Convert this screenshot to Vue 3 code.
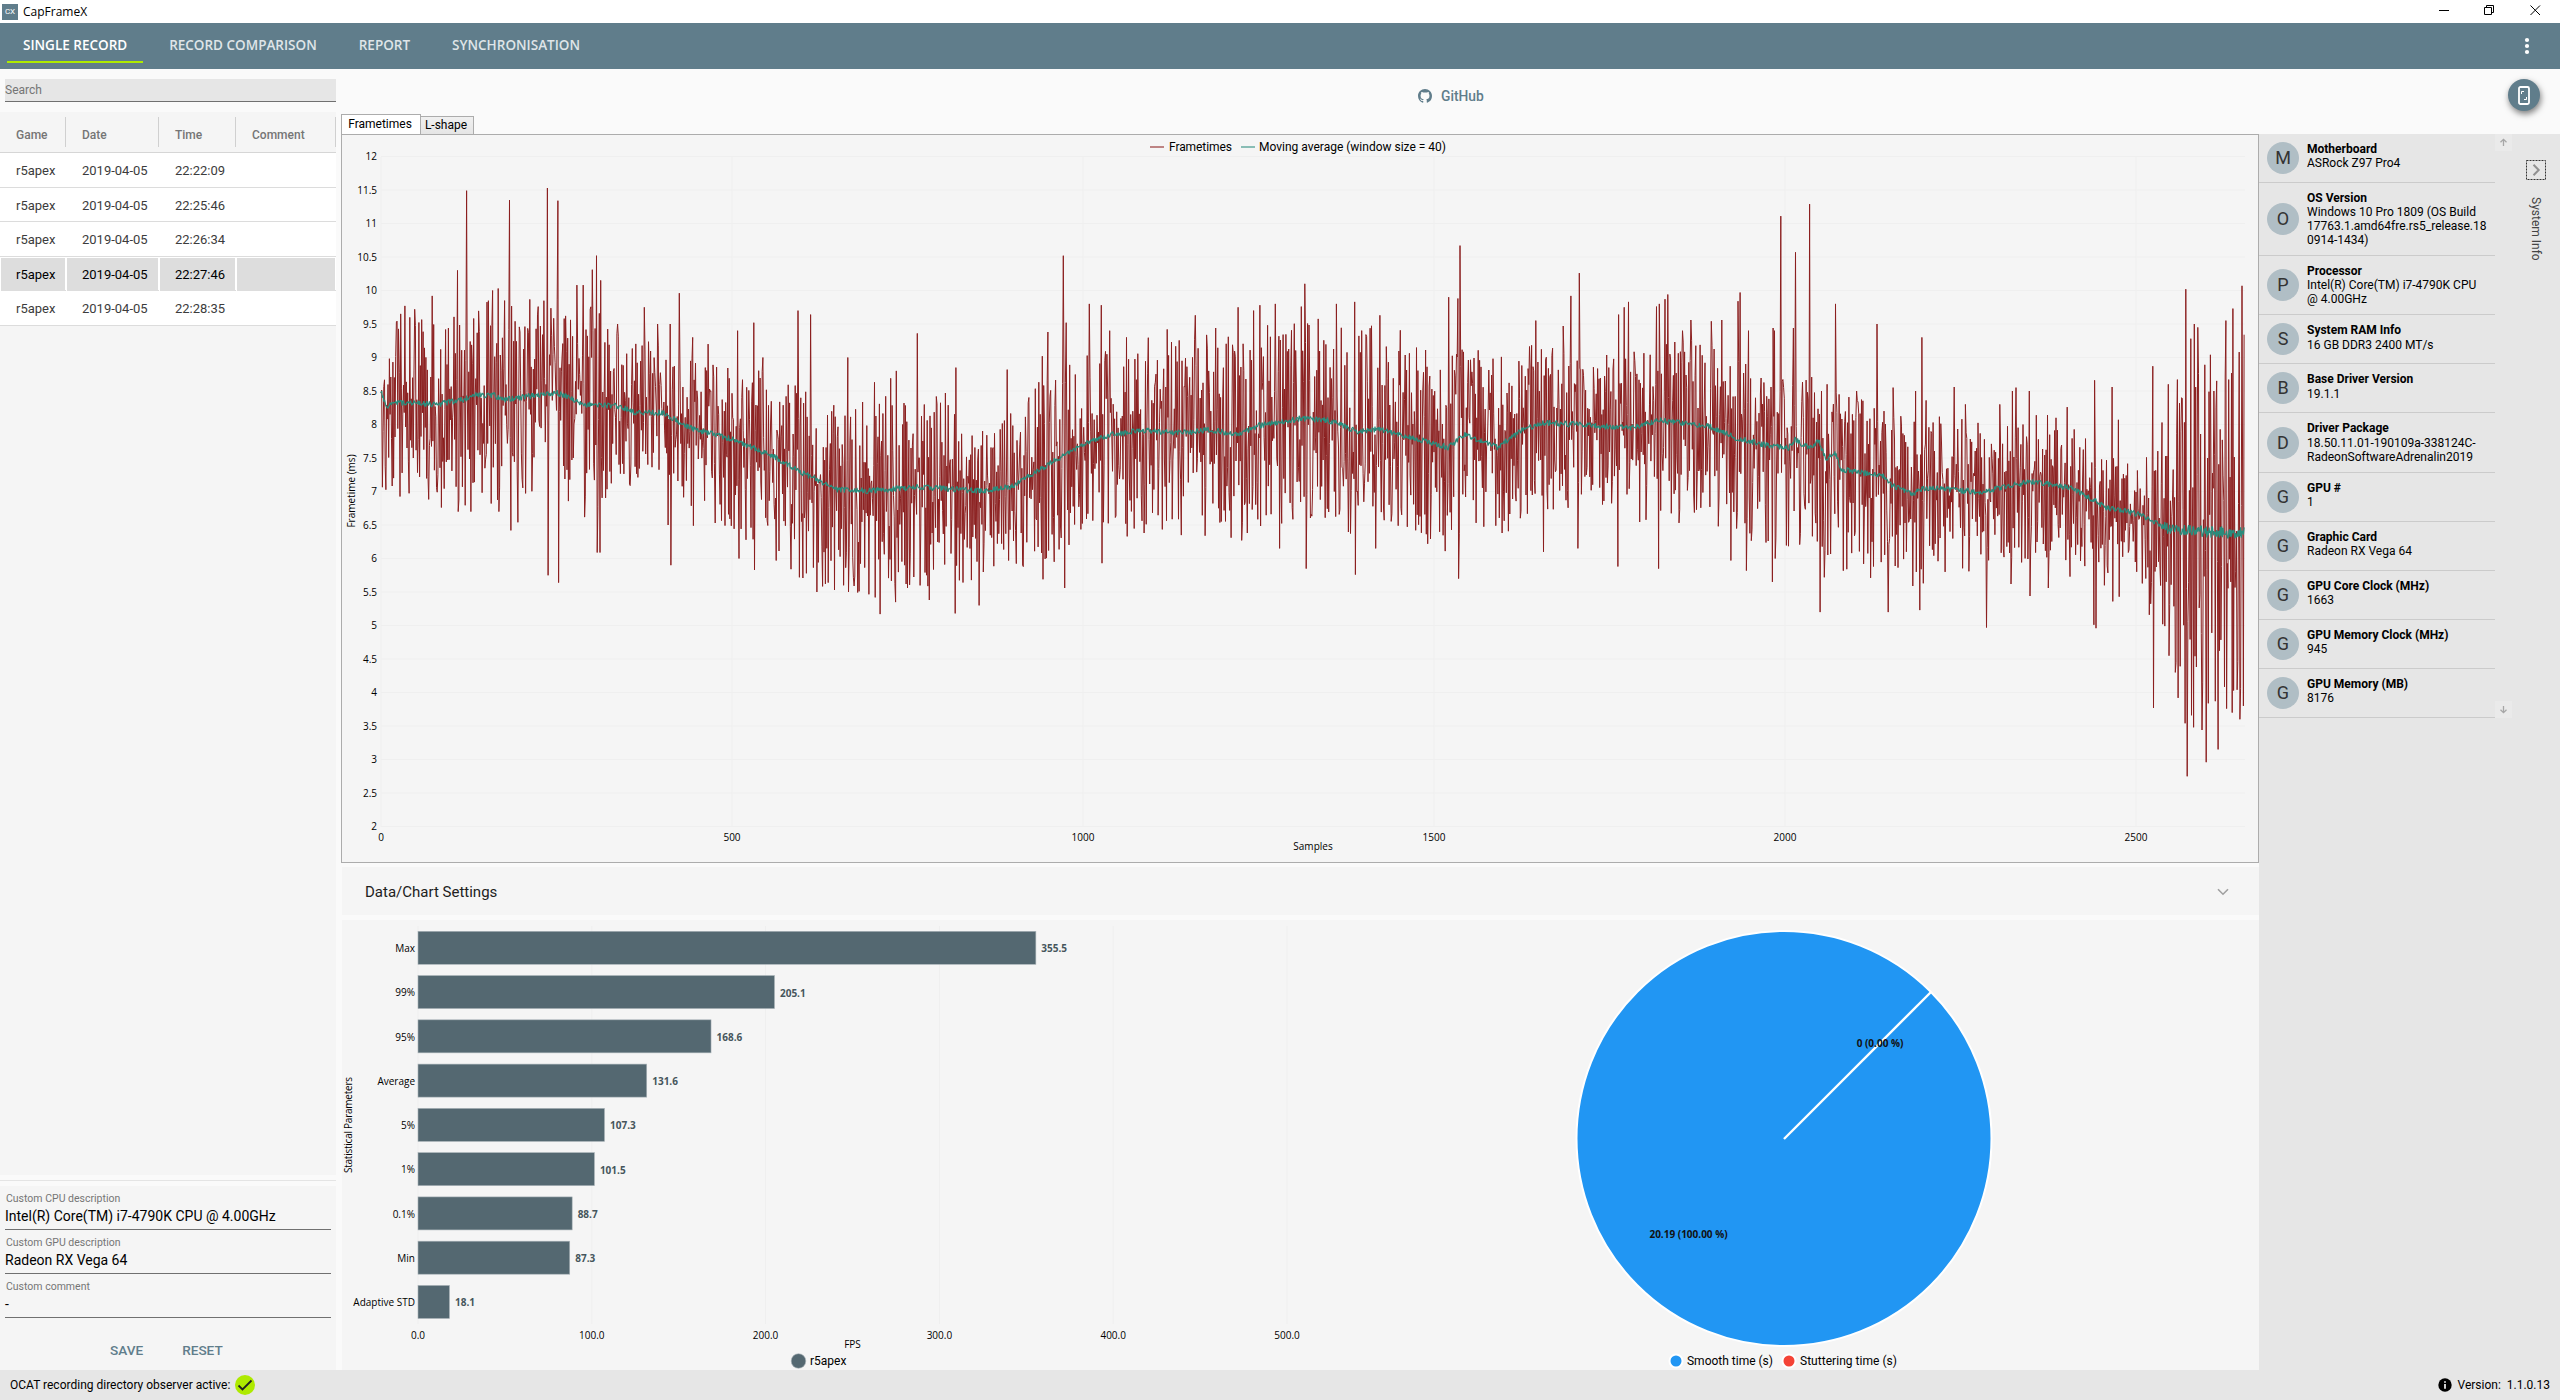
<template>
  <div class="window">
    <header class="title-bar">
      <span class="app-icon">CX</span>
      <span class="app-title">CapFrameX</span>
      <svg class="window-buttons" width="130" height="23" viewBox="0 0 130 23">
        <path d="M9 10.5h10M54.500 7.500h7v7h-7zM56.500 7v-1.500h7v7h-1.500M100.500 5.500l9.500 9.500M110 5.500l-9.500 9.500" />
      </svg>
    </header>

    <nav class="nav">
      <span
        v-for="(tab, i) in tabs"
        :key="tab"
        class="nav-tab"
        :class="{ 'nav-tab--active': i === 0 }"
      >{{ tab }}</span>
      <svg class="nav-menu" width="6" height="18" viewBox="0 0 6 18">
        <circle cx="3" cy="3" r="2.100" />
        <circle cx="3" cy="9" r="2.100" />
        <circle cx="3" cy="15" r="2.100" />
      </svg>
    </nav>

    <main class="body">
      <aside class="records">
        <div class="search">Search</div>
        <div class="record-list">
          <div class="record-row record-row--head">
            <span v-for="name in columns" :key="name" class="cell">{{ name }}</span>
          </div>
          <div
            v-for="time in times"
            :key="time"
            class="record-row"
            :class="{ 'record-row--selected': time === '22:27:46' }"
          >
            <span class="cell">r5apex</span>
            <span class="cell">2019-04-05</span>
            <span class="cell">{{ time }}</span>
            <span class="cell"></span>
          </div>
        </div>
        <div class="splitter"></div>
        <div class="record-form">
          <div v-for="field in fields" :key="field.label" class="field">
            <span class="field-label">{{ field.label }}</span>
            <span class="field-value">{{ field.value }}</span>
          </div>
          <div class="form-buttons">
            <span>SAVE</span>
            <span>RESET</span>
          </div>
        </div>
      </aside>

      <section class="workspace">
        <div class="toolbar">
          <span class="github">
            <svg width="14" height="14" viewBox="0 0 16 16">
              <path d="M8 0C3.580 0 0 3.580 0 8c0 3.540 2.290 6.530 5.470 7.590.4.070.55-.17.55-.38 0-.19-.01-.82-.01-1.490-2.010.37-2.530-.49-2.690-.94-.09-.23-.48-.94-.82-1.130-.28-.15-.68-.52-.01-.53.63-.01 1.080.58 1.230.82.72 1.210 1.870.87 2.330.66.070-.52.28-.87.51-1.070-1.780-.2-3.640-.89-3.640-3.950 0-.87.31-1.590.82-2.150-.08-.2-.36-1.020.08-2.120 0 0 .67-.21 2.200.82.64-.18 1.320-.27 2-.27s1.360.09 2 .27c1.530-1.040 2.200-.82 2.200-.82.44 1.100.16 1.920.08 2.120.51.56.82 1.270.82 2.150 0 3.070-1.870 3.750-3.650 3.950.29.25.54.73.54 1.480 0 1.070-.01 1.930-.01 2.200 0 .21.15.46.55.38A8.010 8.010 0 0 0 16 8c0-4.420-3.580-8-8-8z" />
            </svg>
            GitHub
          </span>
          <span class="fab">
            <svg width="12" height="19" viewBox="0 0 12 19">
              <rect x="1" y="1" width="10" height="17" rx="1.500" />
              <path d="M3.500 8V5.500H6M8.500 11v2.500H6" />
            </svg>
          </span>
        </div>

        <div class="content">
          <div class="charts">
            <div class="chart-tabs">
              <span class="chart-tab chart-tab--active">Frametimes</span>
              <span class="chart-tab">L-shape</span>
            </div>

            <div class="frametime-panel">
              <svg width="1916" height="727" viewBox="0 0 1916 727">
                <g class="grid">
                  <line v-for="v in yTicks" :key="v" x1="39" x2="1903" :y1="yPos(v)" :y2="yPos(v)" />
                  <line v-for="s in xTicks" :key="s" :x1="xPos(s)" :x2="xPos(s)" y1="22" y2="692" />
                </g>
                <path class="line-frametime" :d="framePath" />
                <path class="line-average" :d="averagePath" />
                <g class="tick">
                  <text v-for="v in yTicks" :key="v" x="35" :y="yPos(v) + 3.500" text-anchor="end">{{ v }}</text>
                  <text v-for="s in xTicks" :key="s" :x="xPos(s)" y="706" text-anchor="middle">{{ s }}</text>
                  <text x="971" y="715" text-anchor="middle">Samples</text>
                  <text transform="translate(12.500 356) rotate(-90)" text-anchor="middle">Frametime (ms)</text>
                </g>
                <g class="legend">
                  <line class="line-frametime legend-line" x1="808" x2="822" y1="12" y2="12" />
                  <text x="827" y="16" textLength="63">Frametimes</text>
                  <line class="line-average legend-line" x1="899" x2="913" y1="12" y2="12" />
                  <text x="917" y="16" textLength="187">Moving average (window size = 40)</text>
                </g>
              </svg>
            </div>

            <div class="settings">
              <span>Data/Chart Settings</span>
              <svg width="12" height="8" viewBox="0 0 12 8"><path d="M1 1.200l5 5 5-5" /></svg>
            </div>

            <div class="summary">
              <svg width="967" height="450" viewBox="0 0 967 450">
                <g class="grid">
                  <line v-for="n in 6" :key="n" :x1="fpsPos((n - 1) * 100)" :x2="fpsPos((n - 1) * 100)" y1="6" y2="404" />
                </g>
                <g v-for="(bar, i) in bars" :key="bar.name">
                  <rect class="bar" x="76" :y="11.300 + i * 44.270" :width="bar.fps * 1.738" height="33" />
                  <text class="tick" x="73" :y="32 + i * 44.270" text-anchor="end">{{ bar.name }}</text>
                  <text class="bar-value" :x="fpsPos(bar.fps) + 5.500" :y="32.300 + i * 44.270">{{ bar.fps.toFixed(1) }}</text>
                </g>
                <g class="tick">
                  <text v-for="n in 6" :key="n" :x="fpsPos((n - 1) * 100)" y="419" text-anchor="middle">{{ (n - 1) * 100 }}.0</text>
                  <text x="510.500" y="428" text-anchor="middle">FPS</text>
                  <text transform="translate(10 205) rotate(-90)" text-anchor="middle" textLength="96">Statistical Parameters</text>
                </g>
                <circle class="bar" cx="456.500" cy="441" r="7.300" />
                <text class="legend" x="468" y="445">r5apex</text>
              </svg>

              <svg width="950" height="450" viewBox="0 0 950 450">
                <circle class="pie" cx="475" cy="218.500" r="207.500" />
                <line class="pie-edge" x1="475" y1="219" x2="622" y2="72" />
                <text class="pie-label" x="571" y="127" text-anchor="middle">0 (0.00 %)</text>
                <text class="pie-label" x="379.500" y="318" text-anchor="middle">20.19 (100.00 %)</text>
                <circle class="pie" cx="367" cy="441" r="6.500" />
                <text class="legend" x="378" y="445" textLength="86">Smooth time (s)</text>
                <circle class="pie pie--stutter" cx="480" cy="441" r="6.500" />
                <text class="legend" x="491" y="445" textLength="97">Stuttering time (s)</text>
              </svg>
            </div>
          </div>

          <aside class="system">
            <div class="system-list">
              <div v-for="item in systemInfo" :key="item[0]" class="system-item">
                <span class="avatar">{{ item[0][0] }}</span>
                <div class="system-text">
                  <b>{{ item[0] }}</b>
                  <span v-for="line in item.slice(1)" :key="line">{{ line }}</span>
                </div>
              </div>
            </div>
            <div class="scroll">
              <svg width="17" height="17" viewBox="0 0 17 17"><path d="M8.500 12V5.500M5.500 8.300l3-3 3 3" /></svg>
              <svg width="17" height="17" viewBox="0 0 17 17"><path d="M8.500 5v6.500M5.500 8.700l3 3 3-3" /></svg>
            </div>
            <div class="expander">
              <svg width="20" height="20" viewBox="0 0 20 20">
                <rect x="0.500" y="0.500" width="19" height="19" />
                <path d="M7.500 4.800l5.200 5.200-5.200 5.200" />
              </svg>
              <span>System Info</span>
            </div>
          </aside>
        </div>
      </section>
    </main>

    <footer class="status">
      <span>OCAT recording directory observer active:</span>
      <svg class="status-ok" width="20" height="20" viewBox="0 0 20 20">
        <circle cx="10" cy="10" r="10" />
        <path d="M3.500 10.500l4 4L16.500 5.500" />
      </svg>
      <svg class="status-info" width="14" height="14" viewBox="0 0 14 14">
        <circle cx="7" cy="7" r="6.700" />
        <path d="M7 3.300v1.500M7 6v4.700" />
      </svg>
      <span class="version">Version:&nbsp; 1.1.0.13</span>
    </footer>
  </div>
</template>

<script setup>
const tabs = ['SINGLE RECORD', 'RECORD COMPARISON', 'REPORT', 'SYNCHRONISATION']
const columns = ['Game', 'Date', 'Time', 'Comment']
const times = ['22:22:09', '22:25:46', '22:26:34', '22:27:46', '22:28:35']

const fields = [
  { label: 'Custom CPU description', value: 'Intel(R) Core(TM) i7-4790K CPU @ 4.00GHz' },
  { label: 'Custom GPU description', value: 'Radeon RX Vega 64' },
  { label: 'Custom comment', value: '-' }
]

const systemInfo = [
  ['Motherboard', 'ASRock Z97 Pro4'],
  ['OS Version', 'Windows 10 Pro 1809 (OS Build', '17763.1.amd64fre.rs5_release.18', '0914-1434)'],
  ['Processor', 'Intel(R) Core(TM) i7-4790K CPU', '@ 4.00GHz'],
  ['System RAM Info', '16 GB DDR3 2400 MT/s'],
  ['Base Driver Version', '19.1.1'],
  ['Driver Package', '18.50.11.01-190109a-338124C-', 'RadeonSoftwareAdrenalin2019'],
  ['GPU #', '1'],
  ['Graphic Card', 'Radeon RX Vega 64'],
  ['GPU Core Clock (MHz)', '1663'],
  ['GPU Memory Clock (MHz)', '945'],
  ['GPU Memory (MB)', '8176']
]

const bars = [
  { name: 'Max', fps: 355.5 },
  { name: '99%', fps: 205.1 },
  { name: '95%', fps: 168.6 },
  { name: 'Average', fps: 131.6 },
  { name: '5%', fps: 107.3 },
  { name: '1%', fps: 101.5 },
  { name: '0.1%', fps: 88.7 },
  { name: 'Min', fps: 87.3 },
  { name: 'Adaptive STD', fps: 18.1 }
]

const yTicks = Array.from({ length: 21 }, (_, i) => 12 - i * 0.5)
const xTicks = [0, 500, 1000, 1500, 2000, 2500]
const xPos = (sample) => 39 + sample * 0.702
const yPos = (ms) => 21.5 + (12 - ms) * 67
const fpsPos = (fps) => 76 + fps * 1.738

// sample, moving average (ms)
const average = [
  [0, 8.5], [8, 8.25], [20, 8.33], [80, 8.3], [120, 8.38], [130, 8.44], [160, 8.44], [175, 8.37], [210, 8.42],
  [250, 8.48], [290, 8.3], [340, 8.27], [360, 8.18], [400, 8.18], [440, 7.95], [500, 7.78], [560, 7.52], [600, 7.28],
  [650, 7.03], [700, 7.01], [770, 7.07], [860, 7], [900, 7.08], [950, 7.4], [1000, 7.7], [1040, 7.85], [1080, 7.91],
  [1140, 7.88], [1180, 7.92], [1220, 7.85], [1250, 7.98], [1310, 8.09], [1350, 8.06], [1390, 7.9], [1420, 7.93],
  [1490, 7.75], [1520, 7.66], [1545, 7.85], [1590, 7.66], [1630, 7.95], [1660, 8.03], [1700, 8], [1780, 7.95],
  [1820, 8.06], [1890, 7.98], [1930, 7.8], [1970, 7.7], [2005, 7.65], [2015, 7.77], [2035, 7.65], [2048, 7.75],
  [2058, 7.5], [2072, 7.57], [2080, 7.33], [2140, 7.23], [2150, 7.1], [2180, 6.97], [2200, 7.06], [2280, 6.99],
  [2350, 7.15], [2410, 7.05], [2460, 6.75], [2505, 6.66], [2540, 6.46], [2600, 6.4], [2654, 6.38]
]

// sample, usual swing above and below the average (ms)
const swing = [
  [0, 1.3, 1.4], [100, 1.4, 1.6], [310, 1.5, 1.7], [330, 1.1, 1.2], [500, 1.1, 1.4], [620, 1.4, 1.6], [800, 1.4, 1.5],
  [860, 0.9, 1.3], [940, 1.4, 1.4], [1100, 1.4, 1.5], [1500, 1.6, 1.6], [1720, 1, 1.2], [1800, 1.3, 1.5],
  [1950, 1.2, 1.5], [2060, 1.1, 1.6], [2200, 1.1, 1.2], [2380, 1, 1.2], [2500, 0.7, 0.9], [2550, 1.4, 1.8],
  [2570, 2.5, 2.6], [2654, 2.5, 2.5]
]

// single spikes that leave the usual band
const spikes = {
  34: 9.77, 48: 9.72, 73: 9.92, 109: 10.3, 110: 6.7, 122: 11.49, 128: 6.7, 159: 10, 167: 10.03, 168: 6.7, 176: 9.85,
  183: 11.35, 185: 6.42, 195: 6.54, 224: 9.76, 237: 11.53, 238: 5.75, 252: 11.34, 253: 5.64, 279: 10.08, 288: 10.08,
  301: 10.31, 307: 10.52, 308: 6.09, 312: 6.09, 313: 10.15, 337: 9.5, 375: 9.75, 394: 9.5, 409: 6.5, 412: 9.5,
  413: 5.9, 425: 9.96, 444: 9.3, 445: 6.49, 466: 9.2, 476: 6.53, 508: 9.4, 510: 6, 531: 9.52, 532: 5.83, 544: 9,
  563: 5.97, 584: 5.84, 594: 9.7, 596: 5.72, 612: 9.64, 621: 5.5, 637: 5.64, 646: 5.53, 659: 5.6, 665: 9,
  666: 5.5, 681: 5.51, 703: 8.63, 704: 5.42, 711: 5.17, 726: 8.69, 733: 5.35, 734: 8.8, 764: 9.36, 781: 5.38,
  804: 8.47, 818: 5.18, 819: 8.85, 852: 5.3, 892: 8.82, 914: 5.9, 942: 9.02, 943: 5.69, 950: 9.38, 959: 5.95,
  972: 10.52, 974: 5.56, 976: 9.52, 1009: 9.8, 1026: 9.78, 1027: 5.93, 1038: 9.4, 1062: 9.3, 1063: 6.33,
  1087: 6.38, 1120: 9.42, 1140: 6.35, 1160: 9.63, 1174: 6.34, 1189: 9.44, 1211: 6.31, 1221: 9.75, 1226: 6.27,
  1243: 9.7, 1252: 9.78, 1274: 9.8, 1280: 6.15, 1311: 9.76, 1316: 10.1, 1318: 5.85, 1361: 9.8, 1387: 9.83,
  1388: 5.76, 1417: 6.15, 1423: 9.63, 1521: 9.9, 1534: 9.88, 1535: 5.7, 1537: 10.67, 1645: 9.55, 1656: 6.1,
  1684: 9.47, 1695: 9.92, 1705: 6.15, 1707: 10.26, 1762: 5.88, 1763: 9.64, 1771: 9.75, 1777: 9.83, 1817: 9.76,
  1820: 5.85, 1821: 9.8, 1829: 9.87, 1833: 9.94, 1854: 9.4, 1866: 9.56, 1895: 9.54, 1910: 9.56, 1923: 5.97,
  1933: 9.84, 1936: 9.97, 1945: 5.82, 1948: 9.4, 1982: 5.65, 1983: 9.44, 1985: 9.4, 1986: 6, 1994: 11.11,
  2012: 9.44, 2015: 10.57, 2035: 11.29, 2050: 5.2, 2052: 8.5, 2056: 5.72, 2060: 8.6, 2072: 9.8, 2077: 8.45,
  2088: 5.84, 2102: 8.5, 2122: 5.71, 2131: 9.5, 2147: 5.2, 2154: 8.55, 2182: 5.59, 2186: 8.5, 2192: 5.23,
  2195: 9.3, 2197: 5.63, 2201: 8.36, 2228: 5.8, 2241: 8.56, 2257: 8.3, 2287: 4.97, 2306: 8.3, 2322: 5.62,
  2324: 8.5, 2329: 8.55, 2348: 8.5, 2349: 5.44, 2374: 8.14, 2375: 5.56, 2386: 8.1, 2402: 8.26, 2406: 5.73,
  2440: 5.01, 2441: 8.66, 2443: 4.96, 2455: 5.6, 2466: 8.56, 2467: 5.36, 2475: 8.07, 2476: 5.43, 2519: 5.16,
  2524: 8.87, 2525: 3.77, 2537: 8.03, 2538: 5.02, 2546: 8.6, 2547: 4.55, 2556: 4.3, 2559: 8.67, 2560: 3.92,
  2565: 8.4, 2570: 3.54, 2571: 10.02, 2573: 2.75, 2578: 9.28, 2579: 3.66, 2582: 3.48, 2583: 9.5, 2586: 4.38,
  2588: 9.45, 2594: 3.44, 2600: 2.96, 2606: 9.04, 2608: 4.89, 2611: 8.5, 2613: 3.87, 2615: 8.65, 2617: 3.15,
  2628: 9.55, 2629: 3.76, 2637: 3.7, 2638: 9.73, 2644: 4.04, 2647: 9.08, 2648: 3.6, 2651: 10.07, 2653: 3.8,
  2654: 9.34
}

let seed = 20190405
function random() {
  seed = (seed * 1664525 + 1013904223) % 4294967296
  return seed / 4294967296
}

function interpolate(keys, sample, column = 1) {
  let i = 1
  while (i < keys.length - 1 && keys[i][0] < sample) i++
  const a = keys[i - 1]
  const b = keys[i]
  return a[column] + ((b[column] - a[column]) * (sample - a[0])) / (b[0] - a[0])
}

const toPath = (points) => 'M' + points.map(([s, v]) => `${xPos(s).toFixed(1)} ${yPos(v).toFixed(1)}`).join('L')

const frames = []
const averages = []
let up = true
for (let s = 0; s < 2655; s++) {
  const mean = interpolate(average, s)
  if (random() < 0.7) up = !up
  const reach = Math.pow(random(), 1.1)
  const value = up
    ? mean + interpolate(swing, s, 1) * reach
    : mean - interpolate(swing, s, 2) * reach
  frames.push([s, spikes[s] ?? value])
  averages.push([s, mean + (random() - 0.5) * (s > 2540 ? 0.18 : 0.09)])
}

const framePath = toPath(frames)
const averagePath = toPath(averages)
</script>

<style>
body {
  background: #fafafa;
}
</style>

<style scoped>
.window {
  display: flex;
  flex-direction: column;
  width: 2560px;
  height: 1400px;
  overflow: hidden;
  background: #fafafa;
  color: #212121;
  font-family: Roboto, "Liberation Sans", sans-serif;
  font-size: 12px;
}

svg {
  display: block;
  flex: none;
}

.title-bar {
  display: flex;
  align-items: center;
  flex: none;
  height: 23px;
  padding-left: 2px;
  background: #fff;
  color: #000;
}

.app-icon {
  width: 16px;
  height: 16px;
  background: #607d8b;
  color: #fff;
  font-size: 8px;
  line-height: 16px;
  text-align: center;
}

.app-title {
  margin-left: 5px;
  font-family: "Open Sans", sans-serif;
  font-size: 12px;
}

.window-buttons {
  margin-left: auto;
  fill: none;
  stroke: #000;
}

.nav {
  display: flex;
  align-items: center;
  gap: 10px;
  flex: none;
  height: 46px;
  padding: 0 30px 0 7px;
  background: #607d8b;
  color: #dfe5e8;
  font-family: "Open Sans", sans-serif;
  font-size: 13.5px;
  font-weight: 600;
}

.nav-tab {
  height: 30px;
  margin-top: 1px;
  padding: 0 16px;
  border-bottom: 2px solid transparent;
  line-height: 29px;
}

.nav-tab--active {
  border-color: #aeea00;
  color: #fff;
}

.nav-menu {
  margin-left: auto;
  fill: #fff;
}

.body {
  display: flex;
  flex: none;
  height: 1301px;
}

.records {
  display: flex;
  flex-direction: column;
  flex: none;
  width: 336px;
  padding-top: 10px;
}

.search {
  height: 22px;
  margin: 0 0 10px 5px;
  border-bottom: 1px solid #707070;
  background: #e6e6e6;
  color: #757575;
  line-height: 22px;
}

.record-list {
  height: 1063px;
  background: #f5f5f5;
}

.record-row {
  display: grid;
  grid-template-columns: 66px 93px 77px 100px;
  height: 34.6px;
  box-sizing: border-box;
  border-bottom: 1px solid #dcdcdc;
  background: #fff;
  color: #3c3c3c;
  font-size: 13px;
  line-height: 35px;
}

.cell {
  box-sizing: border-box;
  padding-left: 16px;
}

.record-row--head {
  height: 41px;
  padding-top: 5px;
  border-color: #d6d6d6;
  background: #f5f5f5;
  color: #757575;
  font-size: 12px;
  font-weight: 500;
  line-height: 36px;
}

.record-row--head .cell {
  height: 30px;
  border-right: 1px solid #d0d0d0;
}

.record-row--selected {
  color: #000;
}

.record-row--selected .cell {
  margin: 1px 1px 1px 0;
  border-left: 1px solid #fff;
  padding-left: 15px;
  background: #ddd;
  line-height: 33px;
}

.splitter {
  height: 5px;
  margin-bottom: 5px;
  border-bottom: 1px solid #e4e4e4;
}

.record-form {
  display: flex;
  flex-direction: column;
  flex: 1;
  padding: 0 5px;
  background: #f5f5f5;
}

.field {
  display: flex;
  flex-direction: column;
  height: 44px;
  box-sizing: border-box;
  padding-top: 6px;
  border-bottom: 1px solid #707070;
}

.field-label {
  padding-left: 1px;
  color: #757575;
  font-size: 10.5px;
  line-height: 13px;
}

.field-value {
  color: #000;
  font-size: 14px;
  line-height: 23px;
}

.form-buttons {
  display: flex;
  gap: 39px;
  padding: 22px 0 0 105px;
  color: #607d8b;
  font-size: 13.6px;
  font-weight: 500;
  line-height: 20px;
}

.workspace {
  display: flex;
  flex-direction: column;
  flex: 1;
  padding-left: 5px;
}

.toolbar {
  display: flex;
  align-items: flex-start;
  justify-content: space-between;
  height: 45px;
  padding: 10px 20px 0 1077px;
  box-sizing: border-box;
}

.github {
  display: flex;
  align-items: center;
  gap: 9px;
  height: 34px;
  color: #607d8b;
  font-size: 13.8px;
  font-weight: 500;
}

.github svg {
  fill: #607d8b;
}

.fab {
  display: grid;
  place-items: center;
  width: 32px;
  height: 32px;
  border-radius: 50%;
  background: #607d8b;
  box-shadow: 1px 3px 6px rgba(0, 0, 0, 0.5);
}

.fab svg {
  fill: none;
  stroke: #fff;
  stroke-width: 1.8;
}

.fab path {
  stroke-width: 1;
}

.content {
  display: flex;
  flex: 1;
}

.charts {
  flex: none;
  width: 1918px;
}

.chart-tabs {
  display: flex;
  align-items: flex-end;
  height: 20px;
}

.chart-tab {
  height: 18px;
  box-sizing: border-box;
  width: 53px;
  padding-right: 2px;
  border: 1px solid #acacac;
  border-left: 0;
  border-bottom: 0;
  background: linear-gradient(#f0f0f0, #e5e5e5);
  color: #000;
  line-height: 17px;
  text-align: center;
}

.chart-tab--active {
  width: 80px;
  height: 20px;
  border-left: 1px solid #acacac;
  background: #fff;
  line-height: 19px;
}

.frametime-panel {
  height: 727px;
  border: 1px solid #acacac;
  background: #f5f5f5;
}

.settings {
  display: flex;
  align-items: center;
  justify-content: space-between;
  height: 48px;
  margin: 4px 0 5px 1px;
  padding: 1px 30px 0 23px;
  box-sizing: border-box;
  background: #f5f5f5;
  font-size: 15px;
}

.settings svg {
  fill: none;
  stroke: #a0a0a0;
  stroke-width: 1.6;
}

.summary {
  display: flex;
  height: 450px;
  margin-left: 1px;
  background: #f5f5f5;
}

.grid line {
  stroke: #efefef;
  stroke-width: 1;
}

.tick {
  fill: #000;
  font-family: "Open Sans", sans-serif;
  font-size: 10px;
}

.legend {
  fill: #000;
  font-size: 12px;
}

.line-frametime {
  fill: none;
  stroke: #8b1f1f;
  stroke-width: 1;
  stroke-linejoin: bevel;
}

.line-average {
  fill: none;
  stroke: #2a8c7c;
  stroke-width: 1.2;
  stroke-linejoin: bevel;
}

.legend-line {
  stroke-width: 1.5;
  opacity: 0.7;
}

.bar {
  fill: #546871;
  stroke: #a8b2b7;
  stroke-width: 0.6;
}

.bar-value {
  fill: #46555c;
  font-family: "Open Sans", sans-serif;
  font-size: 10px;
  font-weight: 700;
}

.pie {
  fill: #2196f3;
  stroke: #fff;
  stroke-width: 2;
}

.pie--stutter {
  fill: #f44336;
}

.pie-edge {
  stroke: #fff;
  stroke-width: 2.4;
}

.pie-label {
  fill: #111;
  font-family: "Open Sans", sans-serif;
  font-size: 10px;
  font-weight: 700;
}

.system {
  display: flex;
  align-items: flex-start;
  flex: 1;
  margin-top: 20px;
  background: #e6e6e6;
}

.system-list {
  width: 236px;
}

.system-item {
  display: flex;
  align-items: center;
  gap: 8px;
  padding: 8px;
  border-bottom: 1px solid #cbcbcb;
}

.avatar {
  flex: none;
  width: 32px;
  height: 32px;
  border-radius: 50%;
  background: #b0bec5;
  color: #333;
  font-size: 18px;
  line-height: 32px;
  text-align: center;
}

.system-text {
  display: flex;
  flex-direction: column;
  align-self: flex-start;
  color: #000;
  line-height: 14.06px;
  white-space: nowrap;
}

.scroll {
  display: flex;
  flex-direction: column;
  justify-content: space-between;
  width: 17px;
  height: 584px;
}

.scroll svg {
  background: #eaeaea;
  fill: none;
  stroke: #a6a6a6;
  stroke-width: 1.3;
}

.expander {
  display: flex;
  flex-direction: column;
  align-items: center;
  gap: 17px;
  padding: 26px 0 0 14px;
}

.expander rect {
  fill: none;
  stroke: #333;
  stroke-dasharray: 2 1;
}

.expander path {
  fill: none;
  stroke: #909090;
  stroke-width: 2;
}

.expander span {
  color: #444;
  writing-mode: vertical-rl;
}

.status {
  display: flex;
  align-items: center;
  flex: none;
  height: 30px;
  padding: 0 10px;
  background: #e6e6e6;
  color: #000;
  font-size: 12px;
}

.status-ok {
  margin-left: 5px;
  fill: #aeea00;
}

.status-ok path {
  fill: none;
  stroke: #222;
  stroke-width: 1.8;
}

.status-info {
  margin-left: auto;
  margin-right: 6px;
}

.status-info path {
  stroke: #e6e6e6;
  stroke-width: 1.8;
}
</style>
